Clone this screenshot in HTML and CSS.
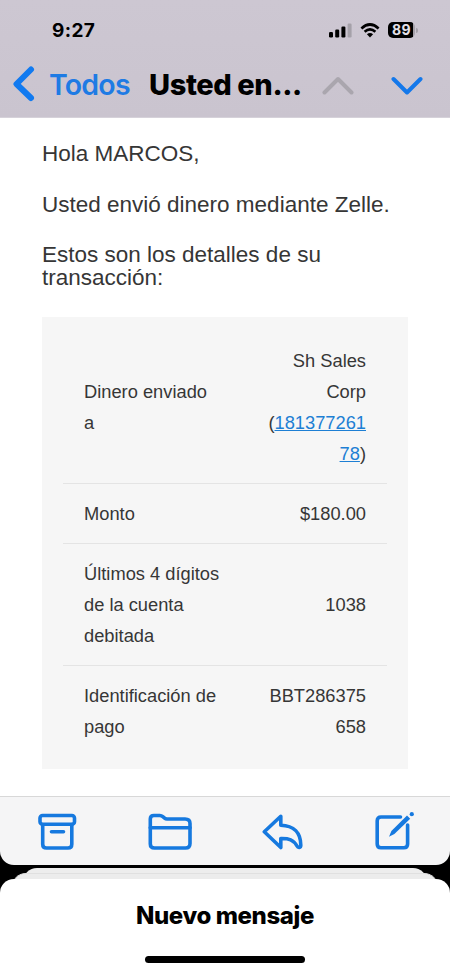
FILE: index.html
```html
<!DOCTYPE html>
<html lang="es">
<head>
  <meta charset="UTF-8">
  <meta name="viewport" content="width=device-width, initial-scale=1.0">
  <title>Usted envió dinero</title>
  <link rel="stylesheet" href="styles.css">
</head>
<body>
<div class="screen">
  <header class="header">
    <div class="status-bar">
      <span class="time">9:27</span>
      <div class="status-icons">
        <svg class="signal" width="23" height="15" viewBox="0 0 23 15">
          <rect x="0" y="9" width="4" height="5.5" rx="1.2"/>
          <rect x="6.2" y="6.5" width="4" height="8" rx="1.2"/>
          <rect x="12.4" y="3.6" width="4" height="10.9" rx="1.2"/>
          <rect x="18.6" y="0.5" width="4" height="14" rx="1.2" fill="#a5a1a9"/>
        </svg>
        <svg class="wifi" width="20" height="15" viewBox="0 0 20 15">
          <path d="M1.4 5.4 Q10 -2.4 18.6 5.4" fill="none" stroke="#000" stroke-width="2.7"/>
          <path d="M4.6 8.8 Q10 4 15.4 8.8" fill="none" stroke="#000" stroke-width="2.6"/>
          <path d="M10 14.4 L6.9 11.2 Q10 8.8 13.1 11.2 Z"/>
        </svg>
        <div class="battery"><span>89</span></div>
        <div class="battery-tip"></div>
      </div>
    </div>
    <nav class="nav">
      <a class="back">
        <svg width="22" height="36" viewBox="0 0 22 36">
          <path d="M18 3.5 L3.5 18 L18 32" fill="none" stroke="#117af0" stroke-width="6" stroke-linecap="round" stroke-linejoin="round"/>
        </svg>
        <span>Todos</span>
      </a>
      <h1>Usted en<span class="dots">...</span></h1>
      <svg class="arrow-up" width="32" height="20" viewBox="0 0 32 20">
        <path d="M2.5 16.5 L16 3 L29.5 16.5" fill="none" stroke="#aaa6ae" stroke-width="4" stroke-linecap="round" stroke-linejoin="round"/>
      </svg>
      <svg class="arrow-down" width="32" height="20" viewBox="0 0 32 20">
        <path d="M2.5 3 L16 16.5 L29.5 3" fill="none" stroke="#1478ea" stroke-width="4" stroke-linecap="round" stroke-linejoin="round"/>
      </svg>
    </nav>
  </header>

  <main class="mail">
    <p>Hola MARCOS,</p>
    <p>Usted envió dinero mediante Zelle.</p>
    <p>Estos son los detalles de su<br>transacción:</p>

    <div class="card">
      <div class="row">
        <div class="label">Dinero enviado<br>a</div>
        <div class="value">Sh Sales<br>Corp<br>(<a href="#">181377261<br>78</a>)</div>
      </div>
      <div class="row">
        <div class="label">Monto</div>
        <div class="value">$180.00</div>
      </div>
      <div class="row">
        <div class="label">Últimos 4 dígitos<br>de la cuenta<br>debitada</div>
        <div class="value">1038</div>
      </div>
      <div class="row">
        <div class="label">Identificación de<br>pago</div>
        <div class="value">BBT286375<br>658</div>
      </div>
    </div>
  </main>

  <div class="toolbar">
    <!-- archivar -->
    <svg width="40" height="40" viewBox="0 0 40 40">
      <rect x="2" y="3.5" width="34.5" height="8.8" rx="2.6"/>
      <path d="M4.7 12.5 V32.2 Q4.7 36 8.5 36 H30 Q33.8 36 33.8 32.2 V12.5"/>
      <path d="M13.5 19.8 H25.5"/>
    </svg>
    <!-- mover -->
    <svg width="46" height="40" viewBox="0 0 46 40">
      <path d="M3.3 32 V7 Q3.3 3.5 6.8 3.5 H12.8 Q14.5 3.5 15.8 4.6 L17.6 6.1 Q18.6 7 20 7 H38 Q43 7 43 11.5 V31.5 Q43 36 38.5 36 H7.5 Q3.3 36 3.3 32 Z"/>
      <path d="M3.3 15.8 H43"/>
    </svg>
    <!-- responder -->
    <svg class="reply" width="42" height="40" viewBox="0 0 42 40">
      <path d="M18.8 4.3 L2.3 19.7 L18.8 35.5 V26.5 C27 26.3 31.5 27.7 35 34 C36 36 38.8 36 38.8 33.2 C38.8 21 32 13.5 18.8 13.2 Z"/>
    </svg>
    <!-- redactar -->
    <svg width="42" height="40" viewBox="0 0 42 40">
      <path d="M26.5 5 H7 Q3.2 5 3.2 8.8 V32 Q3.2 35.8 7 35.8 H29.8 Q33.6 35.8 33.6 32 V13"/>
      <path class="solid" d="M33 3.6 L36.2 6.7 L20.4 22 L15 24.8 L17.4 19 Z"/>
      <circle class="solid" cx="37.8" cy="2.2" r="2.1"/>
    </svg>
  </div>

  <footer class="sheets">
    <div class="sheet sheet-back"></div>
    <div class="sheet sheet-middle"></div>
    <div class="sheet sheet-front">
      <span>Nuevo mensaje</span>
      <div class="home-bar"></div>
    </div>
  </footer>
</div>
</body>
</html>
```
FILE: styles.css
```css
/* Body */
body {
  margin: 0;
  background-color: #000;
  font-family: Inter, sans-serif;
  color: #000;
}

.screen {
  display: flex;
  flex-direction: column;
  width: 450px;
  height: 975px;
  overflow: hidden;
}

/* Header */
.header {
  height: 118px;
  box-sizing: border-box;
  padding-top: 18px;
  background: linear-gradient(#cdc7d2, #cac4cf);
  border-bottom: 1px solid #d6d2da;
}

.status-bar {
  display: flex;
  justify-content: space-between;
  align-items: center;
  height: 24px;
  padding: 0 32px 0 52px;
}

.time {
  font-size: 19px;
  font-weight: 700;
  letter-spacing: 0.4px;
}

.status-icons {
  display: flex;
  align-items: center;
}

.wifi {
  margin: 0 8px;
}

.battery {
  width: 27px;
  height: 16px;
  border-radius: 5px;
  background: linear-gradient(to right, #000 25px, #a5a1a9 25px);
  color: #e4e0e8;
  font-size: 14px;
  font-weight: 700;
  line-height: 16px;
  text-align: center;
  letter-spacing: 0.5px;
}

.battery-tip {
  width: 2px;
  height: 5px;
  margin-left: 1px;
  border-radius: 0 2px 2px 0;
  background-color: #a5a1a9;
}

/* Navigation */
.nav {
  display: flex;
  align-items: center;
  height: 36px;
  margin-top: 24px;
  padding: 0 27px 0 13px;
}

.back {
  display: flex;
  align-items: center;
  width: 136px;
  gap: 14px;
  color: #1e7be4;
  font-size: 28.5px;
  font-weight: 600;
  letter-spacing: -0.8px;
}

.nav h1 {
  width: 173px;
  margin: 0;
  font-size: 29px;
  font-weight: 800;
  letter-spacing: -0.4px;
  white-space: nowrap;
}

.arrow-up,
.arrow-down {
  margin-top: 4px;
}

.arrow-down {
  margin-left: 37px;
}

/* Mail */
.mail {
  height: 678px;
  box-sizing: border-box;
  padding: 25px 42px 0;
  background-color: #fff;
  color: #363636;
  font-family: "Liberation Sans", Arial, sans-serif;
}

.mail p {
  margin: 0 0 28px;
  font-size: 22.5px;
  line-height: 22.6px;
  white-space: nowrap;
}

/* Card */
.card {
  height: 452px;
  box-sizing: border-box;
  padding: 14px 21px;
  background-color: #f6f6f6;
}

.row {
  display: flex;
  justify-content: space-between;
  align-items: center;
  padding: 14px 21px;
  border-bottom: 1px solid #e4e4e4;
  font-size: 18.3px;
  line-height: 31px;
}

.row:last-child {
  border-bottom: none;
}

.value {
  text-align: right;
}

.value a {
  color: #1d7fd4;
}

/* Toolbar */
.toolbar {
  display: flex;
  justify-content: space-between;
  height: 69px;
  box-sizing: border-box;
  padding: 15px 34px 0 38px;
  border-top: 1px solid #d8d8d8;
  border-radius: 0 0 14px 14px;
  background-color: #f5f5f6;
}

.toolbar svg {
  fill: none;
  stroke: #1679df;
  stroke-width: 3.6;
  stroke-linecap: round;
  stroke-linejoin: round;
}

.toolbar .reply {
  margin: 0 1px 0 -1px;
}

.toolbar .solid {
  fill: #1679df;
  stroke: none;
}

/* Sheets */
.sheets {
  display: grid;
  height: 107px;
  margin-top: 3px;
}

.sheet {
  grid-area: 1 / 1;
  border-radius: 14px 14px 0 0;
}

.sheet-back {
  margin: 0 23px;
  background-color: #ededed;
}

.sheet-middle {
  margin: 5px 12px 0;
  background-color: #ececec;
  border-top: 1px solid #e0e0e0;
}

.sheet-front {
  display: flex;
  flex-direction: column;
  align-items: center;
  margin-top: 11px;
  padding-top: 21px;
  background-color: #fff;
  font-size: 24px;
  font-weight: 800;
  line-height: 32px;
  letter-spacing: -0.4px;
}

.home-bar {
  width: 160px;
  height: 7px;
  margin-top: 24px;
  border-radius: 4px;
  background-color: #000;
}
```
